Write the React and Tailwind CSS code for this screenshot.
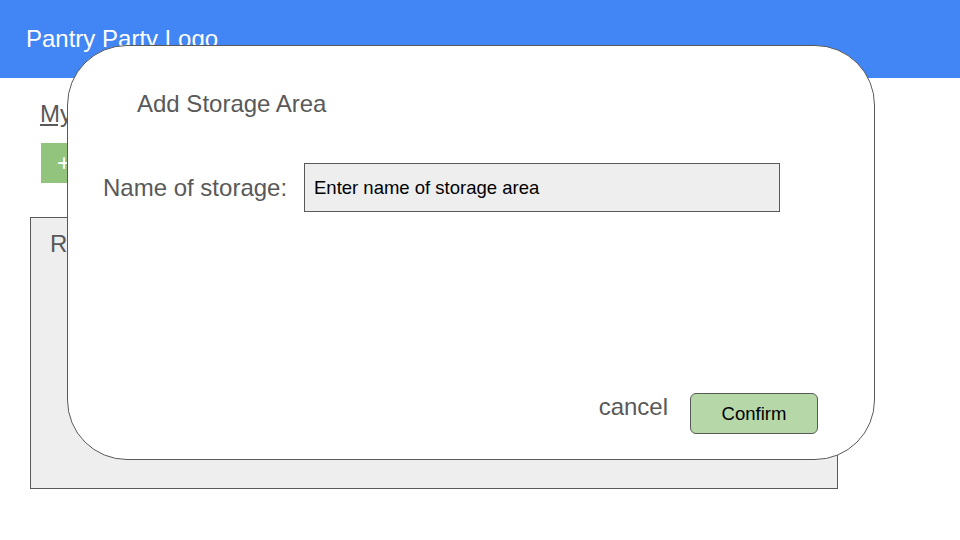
// Pantry page with the "Add Storage Area" dialog open on top.
const FONT = { fontFamily: '"Liberation Sans", Arial, sans-serif' };

function Header() {
  return (
    <header className="flex h-[78px] items-center bg-[#4285f4] pl-[26px]">
      <span className="text-[24px] leading-none text-white">Pantry Party Logo</span>
    </header>
  );
}

function Page() {
  return (
    <main className="px-[30px]">
      <h1 className="ml-[10px] mt-[22px] text-[24px] leading-[28px] text-[#595959] underline">My Storage Areas</h1>
      <button className="ml-[11px] mt-[15px] flex h-[40px] w-[180px] items-center justify-start whitespace-nowrap bg-[#93c47d] pl-[16px] text-[24px] leading-none text-white">
        + Add Storage Area
      </button>
      <section className="mt-[34px] h-[272px] w-[808px] border border-[#595959] bg-[#eeeeee] px-[19px] pt-[12px]">
        <p className="text-[24px] leading-[28px] text-[#595959]">Recently added</p>
      </section>
    </main>
  );
}

function AddStorageModal() {
  return (
    <div className="fixed left-[67px] top-[45px] flex h-[415px] w-[808px] flex-col rounded-[60px] border border-[#595959] bg-white">
      <h2 className="ml-[69px] mt-[44px] text-[24px] leading-[28px] text-[#595959]">Add Storage Area</h2>
      <div className="ml-[35px] mt-[45px] flex items-center">
        <label className="w-[201px] text-[24px] leading-[28px] text-[#595959]">Name of storage:</label>
        <div className="flex h-[49px] w-[476px] items-center border border-[#595959] bg-[#eeeeee] pl-[9px]">
          <span className="text-[18.5px] text-black">Enter name of storage area</span>
        </div>
      </div>
      <div className="mb-[25px] mr-[56px] mt-auto flex items-start justify-end gap-[22px]">
        <span className="text-[24px] leading-[28px] text-[#595959]">cancel</span>
        <button className="flex h-[41px] w-[128px] items-center justify-center rounded-[6px] border border-[#595959] bg-[#b6d7a8] text-[18.5px] text-black">
          Confirm
        </button>
      </div>
    </div>
  );
}

export default function App() {
  return (
    <div className="relative h-[540px] w-[960px] overflow-hidden bg-white" style={FONT}>
      <Header />
      <Page />
      <AddStorageModal />
    </div>
  );
}
